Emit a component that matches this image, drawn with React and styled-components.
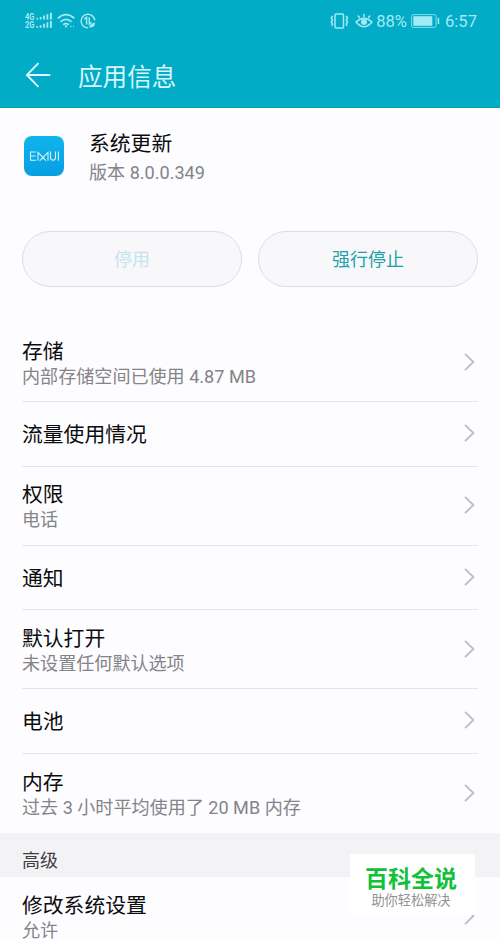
import React from "react";
import styled, { createGlobalStyle } from "styled-components";

const GlobalStyle = createGlobalStyle`
  * { box-sizing: border-box; }
  body {
    margin: 0;
    background: #fdfcff;
    font-family: Roboto, "Noto Sans CJK SC", sans-serif;
  }
`;

const Screen = styled.div`
  position: relative;
  width: 500px;
  height: 939px;
  overflow: hidden;
  background: #fdfcff;
  white-space: nowrap;
`;

const Header = styled.header`
  height: 108px;
  background: #02abc6;
  border-bottom: 1px solid #089db5;
`;

const StatusBar = styled.div`
  display: flex;
  justify-content: space-between;
  height: 42px;
  padding: 0 23px 0 25px;
  color: #a2eaf4;
`;

const StatusGroup = styled.div`
  display: flex;
  align-items: center;
  font-size: 17px;
  line-height: 42px;
`;

const StatusText = styled.span`
  font-size: ${(p) => p.$size}px;
  margin: 1px 0 0 ${(p) => p.$gap}px;
`;

const StatusIcon = styled.svg`
  display: block;
  flex: none;
  margin-left: ${(p) => p.$gap || 0}px;
`;

const TitleBar = styled.div`
  display: flex;
  align-items: center;
  height: 66px;
  padding-left: 25px;
  gap: 27px;
`;

const Title = styled.h1`
  margin: 5px 0 0;
  font-size: 24.6px;
  font-weight: 400;
  line-height: 36px;
  color: #d6f8fb;
`;

const AppSummary = styled.section`
  display: flex;
  height: 123px;
  padding: 21px 24px 0;
  gap: 25px;
`;

const AppIcon = styled.div`
  width: 40px;
  height: 40px;
  margin-top: 7px;
  border-radius: 8px;
  background: linear-gradient(#10b4ec, #079ee2);
`;

const TextStack = styled.div`
  display: flex;
  flex-direction: column;
`;

const RowText = styled(TextStack)`
  padding-top: ${(p) => (p.$tall ? 0 : 4)}px;
`;

const Label = styled.div`
  font-size: 20.8px;
  line-height: 30px;
  color: #0c0c0e;
`;

const Detail = styled.div`
  font-size: 18.08px;
  line-height: ${(p) => p.$leading || 20}px;
  color: #858488;
`;

const Actions = styled.div`
  display: flex;
  gap: 16px;
  padding: 0 22px;
  height: 92px;
`;

const PillButton = styled.button`
  flex: 1;
  height: 56px;
  padding: 2px 0 0;
  border: 1px solid #dedde1;
  border-radius: 28px;
  background: #f8f7fa;
  font: 400 18px/52px Roboto, "Noto Sans CJK SC", sans-serif;
  color: ${(p) => (p.disabled ? "#c4e6ea" : "#219fa9")};
`;

const Row = styled.div`
  display: flex;
  align-items: center;
  justify-content: space-between;
  height: ${(p) => (p.$tall ? 79 : 64.6)}px;
  margin: 0 22px;
  padding: 0 3px 1px 0;
  border-bottom: ${(p) => (p.$last ? "none" : "1px solid #e5e4e8")};
`;

const SectionHeader = styled.h2`
  height: 44px;
  margin: 0;
  padding: 6px 22px 0;
  background: #f3f2f5;
  font-size: 18px;
  font-weight: 400;
  line-height: 44px;
  color: #3e3e41;
`;

const Watermark = styled.aside`
  position: absolute;
  left: 350px;
  top: 854px;
  width: 125px;
  height: 61px;
  padding-top: 11px;
  text-align: center;
  background: #ffffff;
`;

const WatermarkName = styled.div`
  font-size: 23px;
  font-weight: 700;
  line-height: 29px;
  padding-right: 3px;
  color: #12c03a;
`;

const WatermarkTagline = styled.div`
  font-size: 13.2px;
  line-height: 14px;
  padding-right: 3px;
  color: #929292;
`;

const SignalIcon = () => (
  <StatusIcon width="28" height="18" viewBox="0 0 28 18" fill="currentColor">
    <text x="0" y="8" fontSize="8.6" fontWeight="700" textLength="9.5" lengthAdjust="spacingAndGlyphs">4G</text>
    <text x="0" y="16.4" fontSize="8.6" fontWeight="700" textLength="9.5" lengthAdjust="spacingAndGlyphs">2G</text>
    {[0, 8.2].map((y) => (
      <g key={y} transform={`translate(11.5 ${y})`}>
        <rect x="0" y="5.8" width="1.6" height="1.8" />
        <rect x="3.2" y="5" width="1.8" height="2.6" />
        <rect x="6.6" y="3.6" width="1.8" height="4" />
        <rect x="10" y="2.2" width="1.8" height="5.4" />
        <rect x="13.4" y="0.8" width="2" height="6.8" />
      </g>
    ))}
  </StatusIcon>
);

const WifiIcon = () => (
  <StatusIcon $gap={4} width="19" height="16" viewBox="0 0 19 16" fill="none" stroke="currentColor" strokeWidth="1.8">
    <path d="M.8 5.3Q9-2 17.4 5.3M3.5 8.7Q9 4 14.5 8.7M6.2 11.8Q9 9.5 11.8 11.8" />
    <path d="M7.3 12.4h3.4L9 15zM13.2 12.7h1.2v1.6h-1.2zM16.2 12.7h.8v1.6h-.8z" fill="currentColor" stroke="none" />
  </StatusIcon>
);

const DataSaverIcon = () => (
  <StatusIcon $gap={4} width="16" height="16" viewBox="0 0 16 16" fill="none" stroke="currentColor" strokeWidth="1.5">
    <path d="M14.7 7.4A6.8 6.8 0 1 0 8 14.8M6.6 11.5V4.4L4.4 6.2M9.3 4.2v7l2.3-2" />
    <path d="M9.2 14.8Q9.5 10.8 15 9.6Q15.3 14.8 9.2 14.8Z" fill="currentColor" stroke="none" />
  </StatusIcon>
);

const VibrateIcon = () => (
  <StatusIcon width="21" height="16" viewBox="0 0 21 16" fill="none" stroke="currentColor" strokeWidth="1.5">
    <rect x="6" y="1" width="8.5" height="14" rx="1" />
    <path d="M3.6 3l-1.4 2 1.4 2-1.4 2 1.4 2-1 2M17.2 3l1.4 2-1.4 2 1.4 2-1.4 2 1 2" />
  </StatusIcon>
);

const EyeIcon = () => (
  <StatusIcon $gap={5} width="18" height="16" viewBox="0 0 18 16" fill="none" stroke="currentColor" strokeWidth="1.5">
    <path d="M1 9Q9 1.8 17 9Q9 18.5 1 9ZM9 4V.8M4.7 5L2.9 2.5M13.3 5l1.8-2.5" />
    <circle cx="9" cy="9" r="3" fill="currentColor" stroke="none" />
  </StatusIcon>
);

const BatteryIcon = () => (
  <StatusIcon $gap={4} width="29" height="14" viewBox="0 0 29 14">
    <rect x=".6" y=".6" width="24.5" height="12.8" rx="1.8" fill="none" stroke="currentColor" strokeWidth="1" opacity=".8" />
    <rect x="2.3" y="2.2" width="19" height="9.6" fill="currentColor" />
    <rect x="26.7" y="4" width="1.5" height="6" fill="currentColor" />
  </StatusIcon>
);

const BackIcon = () => (
  <svg width="26" height="26" viewBox="0 0 26 26" fill="none" stroke="#e2fbfd" strokeWidth="1.8">
    <path d="M13.5 1.2L1.8 13l11.7 11.8M1.8 13H25.3" />
  </svg>
);

const EmuiLogo = () => (
  <svg width="40" height="40" viewBox="0 0 40 40" fill="none" stroke="#d3f3fd" strokeWidth="1.1">
    <path d="M12 16H6.5V24.2H12M6.5 20H11.6M14 24.7V16.4L22 24.7M15.8 24.7L24 16.4V24.7M26.5 15.5V21.6Q26.5 24.2 29 24.2Q31.5 24.2 31.5 21.6V15.5M34.4 15.5V24.7" />
  </svg>
);

const Chevron = () => (
  <svg width="11" height="18" viewBox="0 0 11 18" fill="none" stroke="#bebdc1" strokeWidth="1.8">
    <path d="M1 .8L9.4 9L1 17.2" />
  </svg>
);

const settings = [
  { label: "存储", detail: "内部存储空间已使用 4.87 MB" },
  { label: "流量使用情况" },
  { label: "权限", detail: "电话" },
  { label: "通知" },
  { label: "默认打开", detail: "未设置任何默认选项" },
  { label: "电池" },
  { label: "内存", detail: "过去 3 小时平均使用了 20 MB 内存", last: true },
];

const SettingRow = ({ label, detail, last }) => (
  <Row $tall={Boolean(detail)} $last={last}>
    <RowText $tall={Boolean(detail)}>
      <Label>{label}</Label>
      {detail && <Detail>{detail}</Detail>}
    </RowText>
    <Chevron />
  </Row>
);

export default function App() {
  return (
    <Screen>
      <GlobalStyle />
      <Header>
        <StatusBar>
          <StatusGroup>
            <SignalIcon />
            <WifiIcon />
            <DataSaverIcon />
          </StatusGroup>
          <StatusGroup>
            <VibrateIcon />
            <EyeIcon />
            <StatusText $size={16.6} $gap={3}>88%</StatusText>
            <BatteryIcon />
            <StatusText $size={16.6} $gap={5}>6:57</StatusText>
          </StatusGroup>
        </StatusBar>
        <TitleBar>
          <BackIcon />
          <Title>应用信息</Title>
        </TitleBar>
      </Header>
      <AppSummary>
        <AppIcon><EmuiLogo /></AppIcon>
        <TextStack>
          <Label>系统更新</Label>
          <Detail $leading={27}>版本 8.0.0.349</Detail>
        </TextStack>
      </AppSummary>
      <Actions>
        <PillButton disabled>停用</PillButton>
        <PillButton>强行停止</PillButton>
      </Actions>
      {settings.map((item) => <SettingRow key={item.label} {...item} />)}
      <SectionHeader>高级</SectionHeader>
      <SettingRow label="修改系统设置" detail="允许" last />
      <Watermark>
        <WatermarkName>百科全说</WatermarkName>
        <WatermarkTagline>助你轻松解决</WatermarkTagline>
      </Watermark>
    </Screen>
  );
}
